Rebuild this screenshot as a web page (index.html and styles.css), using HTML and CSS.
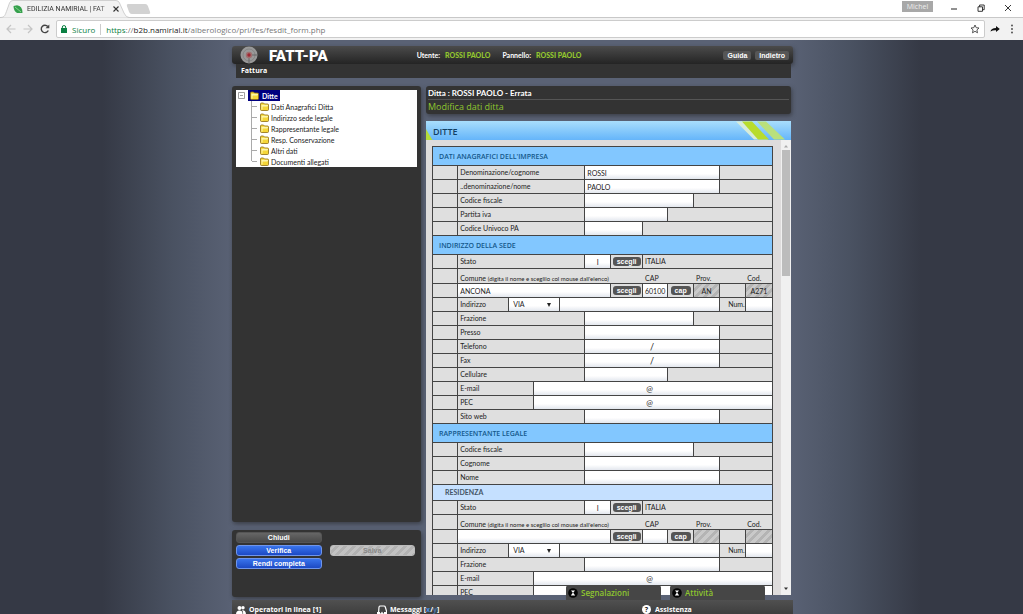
FILE: index.html
```
<!DOCTYPE html>
<html lang="it">
<head>
<meta charset="utf-8">
<title>EDILIZIA NAMIRIAL | FATT-PA</title>
<link rel="stylesheet" href="styles.css">
</head>
<body>
<svg class="defs" aria-hidden="true">
  <symbol id="folder" viewBox="0 0 9 9"><path d="M.5 7.5V2Q.5 1 1.500 1H3.500L4.500 2H7.500Q8.500 2 8.500 3V7.500Q8.500 8.500 7.500 8.500H1.500Q.5 8.500.5 7.500Z" fill="#f5d638" stroke="#8d6b12" stroke-width=".8"/><path d="M1.300 3.300H7.500V4H2V7.500" fill="none" stroke="#fffbc0" stroke-width=".9"/></symbol>
  <symbol id="up" viewBox="0 0 10 10"><circle cx="5" cy="5" r="4.800" fill="#050505"/><path d="M3 2.500H7L5 5ZM5 4.600L7.200 7.500H2.800Z" fill="#fff"/></symbol>
</svg>
<header class="browser">
  <div class="tabs">
    <div class="tab">
      <svg class="tab-shape" viewBox="0 0 129 18" preserveAspectRatio="none"><path d="M0 17.500C5 17.500 5 15 7 10L9.500 3Q10.500 .5 13 .5H116Q118.500 .5 119.500 3L124 13Q126 17.500 129 17.500V18H0Z" fill="#f2f2f2" stroke="#c5c5c5" stroke-width=".8"/></svg>
      <svg class="leaf" viewBox="0 0 10 10"><path d="M.5 2L4 1.300Q9.500 2 9.500 9H4Q.5 7 .5 2Z" fill="#35a04c"/><path d="M2 3L8 8" stroke="#9bdd9f" stroke-width=".8"/></svg>
      <span class="tab-title">EDILIZIA NAMIRIAL | FAT</span>
      <button class="plain tab-close" aria-label="Chiudi scheda"><svg viewBox="0 0 6 6"><path d="M.5.5L5.500 5.500M5.500.5L.5 5.500" stroke="#333" stroke-width="1.100"/></svg></button>
    </div>
    <button class="plain new-tab" aria-label="Nuova scheda"></button>
    <div class="window-buttons">
      <span class="user">Michel</span>
      <button class="plain" aria-label="Riduci"><svg viewBox="0 0 8 8"><path d="M1 5H7" stroke="#222"/></svg></button>
      <button class="plain" aria-label="Ripristina"><svg viewBox="0 0 8 8" fill="none" stroke="#222" stroke-width=".9"><path d="M1 2.800H5.500V7.300H1ZM2.600 2.800V1H7.200V5.700H5.500"/></svg></button>
      <button class="plain" aria-label="Chiudi"><svg viewBox="0 0 8 8"><path d="M1 1L7 7M7 1L1 7" stroke="#222" stroke-width=".9"/></svg></button>
    </div>
  </div>
  <div class="toolbar">
    <button class="plain" aria-label="Indietro"><svg viewBox="0 0 10 10" fill="none" stroke="#c4c4c4" stroke-width="1.200"><path d="M9.500 5H1M5 1L1 5L5 9"/></svg></button>
    <button class="plain" aria-label="Avanti"><svg viewBox="0 0 10 10" fill="none" stroke="#c4c4c4" stroke-width="1.200"><path d="M.5 5H9M5 1L9 5L5 9"/></svg></button>
    <button class="plain" aria-label="Ricarica"><svg viewBox="0 0 10 10" fill="none" stroke="#444" stroke-width="1.400"><path d="M8.300 6.500A3.700 3.700 0 1 1 7.800 2.500"/><path d="M9.300.5V4.300H5.500Z" fill="#444" stroke="none"/></svg></button>
    <div class="address">
      <svg class="lock" viewBox="0 0 6 8"><path d="M0 3H6V8H0Z" fill="#0b8043"/><path d="M1.300 3V2Q1.300.6 3 .6T4.700 2V3" fill="none" stroke="#0b8043"/></svg>
      <span class="secure">Sicuro</span>
      <span class="url"><span class="secure">https</span>://<b>b2b.namirial.it</b>/alberologico/pri/fes/fesdit_form.php</span>
      <svg class="star" viewBox="0 0 10 10"><path d="M5 1L6.200 3.700L9 4L6.900 5.900L7.500 8.800L5 7.300L2.500 8.800L3.100 5.900L1 4L3.800 3.700Z" fill="none" stroke="#444" stroke-width=".9"/></svg>
    </div>
    <button class="plain" aria-label="Condividi"><svg viewBox="0 0 10 10"><path d="M.5 7.500Q1 4 6 4V2L9.800 5L6 8V6.300Q3 6 .5 7.500Z" fill="#111"/></svg></button>
    <button class="plain" aria-label="Menu"><svg viewBox="0 0 10 10" fill="#444"><circle cx="5" cy="1.500" r=".9"/><circle cx="5" cy="5" r=".9"/><circle cx="5" cy="8.500" r=".9"/></svg></button>
  </div>
</header>
<div class="page">
  <div class="app">
    <header class="masthead">
      <div class="brand-bar">
        <svg class="logo" viewBox="0 0 18 18"><circle cx="9" cy="9" r="8.500" fill="#999"/><circle cx="9" cy="9" r="6" fill="none" stroke="#777" stroke-width=".6"/><path d="M9 9V17.500M9 9H17" stroke="#555" stroke-width=".7"/><circle cx="9" cy="9" r="3.200" fill="#a07070"/><circle cx="9" cy="9" r="1.700" fill="#a02833"/></svg>
        <h1>FATT-PA</h1>
        <div class="who"><span>Utente:</span><b>ROSSI PAOLO</b><span class="next">Pannello:</span><b>ROSSI PAOLO</b></div>
        <div class="brand-buttons"><button>Guida</button><button>Indietro</button></div>
      </div>
      <nav class="menu-bar">Fattura</nav>
    </header>
    <div class="columns">
      <aside>
        <div class="panel tree-panel">
          <div class="tree">
            <div class="root"><svg class="toggle" viewBox="0 0 7 7"><path d="M.5.5H6.500V6.500H.5ZM2 3.500H5" fill="none" stroke="#888" stroke-width=".8"/></svg><span class="selected"><svg class="folder"><use href="#folder"/></svg>Ditte</span></div>
            <ul>
              <li><svg class="folder"><use href="#folder"/></svg>Dati Anagrafici Ditta</li>
              <li><svg class="folder"><use href="#folder"/></svg>Indirizzo sede legale</li>
              <li><svg class="folder"><use href="#folder"/></svg>Rappresentante legale</li>
              <li><svg class="folder"><use href="#folder"/></svg>Resp. Conservazione</li>
              <li><svg class="folder"><use href="#folder"/></svg>Altri dati</li>
              <li><svg class="folder"><use href="#folder"/></svg>Documenti allegati</li>
            </ul>
          </div>
        </div>
        <div class="panel actions">
          <button class="grey">Chiudi</button>
          <button class="blue first">Verifica</button>
          <button class="off" disabled>Salva</button>
          <button class="blue first">Rendi completa</button>
        </div>
      </aside>
      <main>
        <div class="panel heading">
          <p>Ditta : ROSSI PAOLO - Errata</p>
          <h2>Modifica dati ditta</h2>
        </div>
        <section class="sheet">
          <h3 class="sheet-title">DITTE<svg class="stripes" viewBox="0 0 50 18"><path d="M0 0H14L32 18H18Z" fill="#d8ecd8"/><path d="M6 0H16L33 18H22Z" fill="#b8dc2c"/><path d="M21 0H30L49 18H38Z" fill="#b9e07c"/></svg></h3>
          <div class="sheet-body">
            <form class="scroll">
              <table>
                <colgroup><col class="c25"><col class="c51"><col class="c25"><col class="c26"><col class="c25"><col class="c26"><col class="c32"><col class="c25"><col class="c26"><col class="c26"><col class="c26"><col class="c27"></colgroup>
                <tbody>
                <tr class="section"><th colspan="12">DATI ANAGRAFICI DELL'IMPRESA</th></tr>
                <tr><td></td><td colspan="4"><label for="a1">Denominazione/cognome</label></td><td colspan="5" class="f"><input id="a1" value="ROSSI"></td><td colspan="2"></td></tr>
                <tr><td></td><td colspan="4"><label for="a2">..denominazione/nome</label></td><td colspan="5" class="f"><input id="a2" value="PAOLO"></td><td colspan="2"></td></tr>
                <tr><td></td><td colspan="4"><label for="a3">Codice fiscale</label></td><td colspan="4" class="f"><input id="a3"></td><td colspan="3"></td></tr>
                <tr><td></td><td colspan="4"><label for="a4">Partita iva</label></td><td colspan="3" class="f"><input id="a4"></td><td colspan="4"></td></tr>
                <tr><td></td><td colspan="4"><label for="a5">Codice Univoco PA</label></td><td colspan="2" class="f"><input id="a5"></td><td colspan="5"></td></tr>
                <tr class="section"><th colspan="12">INDIRIZZO DELLA SEDE</th></tr>
                <tr><td></td><td colspan="4"><label for="b1">Stato</label></td><td class="f"><input id="b1" class="mid" value="I"></td><td class="b"><button type="button">scegli</button></td><td colspan="5">ITALIA</td></tr>
                <tr class="captions"><td></td><td colspan="6" class="open"><label for="b2">Comune <small>(digita il nome e sceglilo col mouse dall'elenco)</small></label></td><td colspan="2" class="open"><label for="b3">CAP</label></td><td colspan="2" class="open"><label for="b4">Prov.</label></td><td class="last"><label for="b5">Cod.</label></td></tr>
                <tr><td></td><td colspan="5" class="f"><input id="b2" value="ANCONA"></td><td class="b"><button type="button">scegli</button></td><td class="f"><input id="b3" class="mid" value="60100"></td><td class="b"><button type="button">cap</button></td><td class="f"><input id="b4" class="mid hatch" value="AN" readonly></td><td></td><td class="f"><input id="b5" class="mid hatch" value="A271" readonly></td></tr>
                <tr><td></td><td><label for="b6">Indirizzo</label></td><td colspan="2" class="f"><div class="pick"><select id="b6"><option>VIA</option></select></div></td><td colspan="6" class="f"><input aria-label="Via"></td><td class="num"><label for="b7">Num.</label></td><td class="f"><input id="b7"></td></tr>
                <tr><td></td><td colspan="4"><label for="b8">Frazione</label></td><td colspan="4" class="f"><input id="b8"></td><td colspan="3"></td></tr>
                <tr><td></td><td colspan="4"><label for="b9">Presso</label></td><td colspan="5" class="f"><input id="b9"></td><td colspan="2"></td></tr>
                <tr><td></td><td colspan="4"><label for="b10">Telefono</label></td><td colspan="5" class="f"><input id="b10" class="mid sign" value="/"></td><td colspan="2"></td></tr>
                <tr><td></td><td colspan="4"><label for="b11">Fax</label></td><td colspan="5" class="f"><input id="b11" class="mid sign" value="/"></td><td colspan="2"></td></tr>
                <tr><td></td><td colspan="4"><label for="b12">Cellulare</label></td><td colspan="3" class="f"><input id="b12"></td><td colspan="4"></td></tr>
                <tr><td></td><td colspan="2"><label for="b13">E-mail</label></td><td colspan="9" class="f"><input id="b13" class="mid at" value="@"></td></tr>
                <tr><td></td><td colspan="2"><label for="b14">PEC</label></td><td colspan="9" class="f"><input id="b14" class="mid at" value="@"></td></tr>
                <tr><td></td><td colspan="4"><label for="b15">Sito web</label></td><td colspan="5" class="f"><input id="b15"></td><td colspan="2"></td></tr>
                <tr class="section"><th colspan="12">RAPPRESENTANTE LEGALE</th></tr>
                <tr><td></td><td colspan="4"><label for="d1">Codice fiscale</label></td><td colspan="4" class="f"><input id="d1"></td><td colspan="3"></td></tr>
                <tr><td></td><td colspan="4"><label for="d2">Cognome</label></td><td colspan="5" class="f"><input id="d2"></td><td colspan="2"></td></tr>
                <tr><td></td><td colspan="4"><label for="d3">Nome</label></td><td colspan="5" class="f"><input id="d3"></td><td colspan="2"></td></tr>
                <tr class="subsection"><th colspan="12">RESIDENZA</th></tr>
                <tr><td></td><td colspan="4"><label for="e1">Stato</label></td><td class="f"><input id="e1" class="mid" value="I"></td><td class="b"><button type="button">scegli</button></td><td colspan="5">ITALIA</td></tr>
                <tr class="captions"><td></td><td colspan="6" class="open"><label for="e2">Comune <small>(digita il nome e sceglilo col mouse dall'elenco)</small></label></td><td colspan="2" class="open"><label for="e3">CAP</label></td><td colspan="2" class="open"><label for="e4">Prov.</label></td><td class="last"><label for="e5">Cod.</label></td></tr>
                <tr><td></td><td colspan="5" class="f"><input id="e2"></td><td class="b"><button type="button">scegli</button></td><td class="f"><input id="e3"></td><td class="b"><button type="button">cap</button></td><td class="f"><input id="e4" class="hatch" readonly></td><td></td><td class="f"><input id="e5" class="hatch" readonly></td></tr>
                <tr><td></td><td><label for="e6">Indirizzo</label></td><td colspan="2" class="f"><div class="pick"><select id="e6"><option>VIA</option></select></div></td><td colspan="6" class="f"><input aria-label="Via"></td><td class="num"><label for="e7">Num.</label></td><td class="f"><input id="e7"></td></tr>
                <tr><td></td><td colspan="4"><label for="e8">Frazione</label></td><td colspan="5" class="f"><input id="e8"></td><td colspan="2"></td></tr>
                <tr><td></td><td colspan="2"><label for="e9">E-mail</label></td><td colspan="9" class="f"><input id="e9" class="mid at" value="@"></td></tr>
                <tr><td></td><td colspan="2"><label for="e10">PEC</label></td><td colspan="9" class="f"><input id="e10"></td></tr>
                </tbody>
              </table>
            </form>
            <div class="scrollbar"><svg viewBox="0 0 6 6"><path d="M1 4.500L3 2L5 4.500Z" fill="#aaa"/></svg><div class="track"><div class="thumb"></div></div><svg viewBox="0 0 6 6"><path d="M1 1.500L3 4L5 1.500Z" fill="#333"/></svg></div>
          </div>
        </section>
      </main>
    </div>
    <div class="drawers"><button><svg><use href="#up"/></svg>Segnalazioni</button><button><svg><use href="#up"/></svg>Attività</button></div>
    <footer>
      <span class="item"><svg viewBox="0 0 10 10" fill="#fff"><circle cx="3.500" cy="3" r="2"/><circle cx="7" cy="2.800" r="1.700"/><path d="M0 9.500Q0 5.500 3.500 5.500T6.500 9.500ZM7 9.500Q7.500 6.500 6 5.200Q10 4.800 10 9.500Z"/></svg>Operatori in linea [1]</span>
      <span class="item"><svg viewBox="0 0 10 10"><path d="M1.500 8.500L2 2Q2.200 1 3.500 1H7Q8 1 8.300 2L9.500 6V9H6L5 7.500L4 9Z" fill="none" stroke="#fff" stroke-width="1.200"/><path d="M0 7H3V10H0ZM7 7H10V10H7Z" fill="#fff"/></svg><span>Messaggi [<i>x</i>/<i class="dim">y</i>]</span></span>
      <span class="item"><span class="help">?</span>Assistenza</span>
    </footer>
  </div>
</div>
</body>
</html>
```
FILE: styles.css
```
* { box-sizing: border-box; }
body { margin: 0; height: 100vh; display: flex; flex-direction: column; overflow: hidden; font-family: "Open Sans", "Noto Sans", sans-serif; font-size: 7px; color: #222; }
button, input, select { font: inherit; color: inherit; margin: 0; padding: 0; border: 0; }
h1, h2, h3, p, ul { margin: 0; padding: 0; }
svg { display: block; flex: none; }
.defs { display: none; }
.plain { background: none; flex: none; }

/* browser frame */
.browser { flex: none; background: #fff; }
.tabs { display: flex; height: 18px; align-items: flex-start; border-bottom: 1px solid #c8c8c8; }
.tab { position: relative; width: 129px; height: 18px; display: flex; align-items: center; padding: 0 10px 0 13px; gap: 4px; }
.tab-shape { position: absolute; inset: 0; width: 100%; height: 100%; }
.leaf { position: relative; width: 10px; height: 10px; }
.tab-title { position: relative; flex: 1; white-space: nowrap; font-family: Roboto, sans-serif; font-size: 7px; color: #333; mask-image: linear-gradient(90deg, #000 85%, #0006); }
.tab-close { position: relative; width: 6px; }
.new-tab { width: 21px; height: 10px; margin: 4px 0 0 -1px; background: #d2d2d2; transform: skewX(20deg); border-radius: 2px; }
.window-buttons { margin-left: auto; display: flex; align-items: center; gap: 19px; padding-right: 11px; }
.window-buttons svg { width: 8px; height: 8px; margin-top: 4px; }
.user { width: 31px; height: 11px; margin-right: -2px; background: #a8a8a8; color: #eee; font-size: 7px; line-height: 11px; text-align: center; }
.toolbar { display: flex; align-items: center; gap: 7px; height: 22px; padding: 0 6px; background: #f2f2f2; }
.toolbar svg { width: 10px; height: 10px; }
.address { flex: 1; display: flex; align-items: center; gap: 5px; height: 18px; padding: 0 4px; margin: 0 -2px 0 -1px; background: #fff; border: 1px solid #ccc; border-radius: 2px; font-size: 8px; color: #777; }
.toolbar .lock { width: 6px; height: 8px; }
.secure { color: #0b8043; }
.url { border-left: 1px solid #ccc; padding-left: 5px; }
.url b { font-weight: 400; color: #222; }
.star { margin-left: auto; }

/* application */
.page { flex: 1; min-height: 0; display: flex; justify-content: center; background: linear-gradient(90deg, #353945 10%, #4a5262 17%, #5a6275 23%, #5a6275 77%, #4a5262 83%, #353945 90%); }
.app { position: relative; width: 100%; max-width: 559px; display: flex; flex-direction: column; padding-top: 6px; }
.masthead { flex: none; margin-right: -2px; color: #fff; }
.brand-bar { display: flex; align-items: center; height: 18px; padding: 0 4px 0 8px; background: linear-gradient(#4b4b4b, #242424); border-radius: 3px; box-shadow: 1px 2px 4px #2228; }
.logo { width: 18px; height: 18px; }
h1 { margin-left: 11px; padding-top: 2px; font: 900 15px/18px Roboto, sans-serif; }
.who { display: flex; gap: 5px; margin-left: 89px; font-family: Lato, sans-serif; font-weight: 700; line-height: 9px; }
.who b { color: #93c72e; }
.who .next { margin-left: 7px; }
.brand-buttons { display: flex; gap: 4px; margin-left: auto; }
.brand-buttons button { height: 9px; padding: 0 4px; background: #565656; border-radius: 2px; font-family: "Liberation Sans", sans-serif; font-weight: 700; line-height: 9px; color: #fff; }
.menu-bar { margin: 0 2px 0 4px; padding: 2px 5px; height: 14px; background: #333; font-weight: 700; font-size: 7px; line-height: 10px; }
.columns { flex: 1; min-height: 0; display: grid; grid-template-columns: 189px 1fr; gap: 5px; margin: 8px 0 19px; }
aside, main { min-height: 0; min-width: 0; display: flex; flex-direction: column; }
aside { gap: 8px; margin-bottom: -2px; }
main { gap: 7px; }
.panel { background: #333; border-radius: 3px; box-shadow: 1px 2px 4px #2228; }
.tree-panel { flex: 1; padding: 4px; }
.tree { height: 77px; background: #fff; color: #222; font-family: Lato, sans-serif; }
.root { display: flex; gap: 3px; align-items: center; height: 11px; padding-left: 2px; }
.toggle { width: 7px; height: 7px; }
.selected { display: flex; gap: 3px; align-items: center; height: 11px; padding: 0 2px; background: #000080; color: #fff; font-weight: 700; }
.folder { width: 9px; height: 9px; }
.tree ul { list-style: none; margin-left: 15px; }
.tree li { display: flex; align-items: center; gap: 2px; height: 11px; padding-left: 8px; border-left: 1px solid #aaa; background: linear-gradient(#aaa, #aaa) 0 5px / 5px 1px no-repeat; white-space: nowrap; }
.tree li:last-child { border-image: linear-gradient(#aaa 50%, transparent 50%) 1; }
.actions { flex: none; height: 67px; display: grid; grid-template-columns: 1fr 1fr; grid-auto-rows: 11px; gap: 2px 8px; padding: 2px 6px 0 4px; }
.actions button { border-radius: 3px; font: 700 7px/9px "Liberation Sans", sans-serif; color: #fff; border: 1px solid #6f95ea; }
.actions .first { grid-column: 1; }
.actions .blue { background: linear-gradient(#3974ec, #1c49c4); }
.actions .grey { background: linear-gradient(#666, #4a4a4a); border-color: #555; }
.actions .off { background: repeating-linear-gradient(135deg, #c2c2c2 0 3px, #b2b2b2 3px 6px); color: #888; border-color: #bbb; }
.heading { flex: none; height: 28px; padding: 0 2px; color: #fff; }
.heading p { height: 14px; border-bottom: 1px solid #555; font-family: Lato, sans-serif; font-weight: 700; font-size: 8px; line-height: 14px; }
.heading h2 { color: #8ec52f; font-weight: 400; font-size: 9px; line-height: 13px; }
.sheet { flex: 1; min-height: 0; display: flex; flex-direction: column; background: #dedcdc; }
.sheet-title { flex: none; display: flex; align-items: center; height: 19px; padding: 2px 0 0 7px; background: linear-gradient(60deg, #b5dc3a 5px, transparent 6px), linear-gradient(#a9defc, #65b5fa); color: #123f63; font-weight: 600; font-size: 9px; }
.stripes { width: 50px; height: 19px; margin: -2px 5px 0 auto; }
.sheet-body { flex: 1; min-height: 0; display: flex; }
.scroll { flex: 1; min-width: 0; overflow: hidden; padding: 6px 8px 0 6px; font-family: Lato, sans-serif; }
table { width: 100%; table-layout: fixed; border-collapse: collapse; background: #dfdfdf; }
.c25 { width: 7.4%; }
.c26 { width: 7.6%; }
.c27 { width: 8%; }
.c32 { width: 9.4%; }
.c51 { width: 15%; }
td, th { border: 1px solid #444; padding: 0 2px; height: 14px; line-height: 11px; text-align: left; font-weight: 400; white-space: nowrap; }
.section th { height: 19px; padding-left: 6px; background: #82c7ff; color: #14588c; font-family: "Open Sans", sans-serif; font-weight: 600; }
.subsection th { height: 16px; padding-left: 12px; background: #c5e0ff; color: #456; font-weight: 700; }
.f, .b { padding: 0; }
.f input, .f select { display: block; width: 100%; height: 13px; padding: 0 2px; background: linear-gradient(#fff 60%, #e3e7ee); border-radius: 0; }
.f .mid { text-align: center; padding: 0; }
.f .sign, .f .at { font-size: 9px; }
.f .at { font-size: 8px; padding-right: 7px; }
.f .hatch { background: repeating-linear-gradient(135deg, #c9c9c9 0 3px, #b4b4b4 3px 6px); }
.b { text-align: center; }
.b button { display: block; height: 9px; margin: 0 auto; padding: 0 4px; background: #555; border-radius: 3px; color: #fff; font-family: "Liberation Sans", sans-serif; font-weight: 700; line-height: 8px; }
.captions td { height: 15px; padding-top: 4px; line-height: 9px; }
.captions .open, .captions .last { border-left-color: transparent; border-right: 0; }
.captions .open:nth-child(2) { border-left: 1px solid #444; }
.captions .last { border-left: 0; border-right: 1px solid #444; }
.captions small { font-size: 6px; }
.num { padding: 0; text-align: right; }
.pick { position: relative; }
.pick select { appearance: none; padding-left: 4px; }
.pick::after { content: ""; position: absolute; right: 8px; top: 5px; border: 2px solid transparent; border-top: 4px solid #222; border-bottom: 0; }
.scrollbar { flex: none; width: 10px; display: flex; flex-direction: column; align-items: center; padding: 2px 0; background: #f0f0f0; }
.scrollbar svg { width: 6px; height: 8px; }
.track { flex: 1; width: 8px; }
.thumb { height: 29%; background: #bcbcbc; }
.drawers { position: absolute; right: 26px; bottom: 14px; display: flex; gap: 9px; }
.drawers button { width: 95px; height: 15px; display: flex; align-items: center; gap: 3px; padding-left: 2px; background: #464646; border-radius: 3px 3px 0 0; color: #8ec52f; font-size: 8px; font-weight: 600; }
.drawers svg { width: 10px; height: 10px; }
footer { position: absolute; left: 0; right: -2px; bottom: 0; height: 14px; display: grid; grid-template-columns: 141px 1fr 151px; padding: 5px 0 0 4px; background: linear-gradient(#505050, #3e3e3e); color: #fff; font-weight: 700; line-height: 9px; }
.item { display: flex; height: 9px; white-space: pre; }
.item svg { width: 10px; height: 10px; margin-right: 3px; }
.item i { font-style: normal; color: #4a90e0; }
.item .dim { color: #4a73a8; }
.help { width: 9px; height: 9px; margin-right: 4px; border-radius: 50%; background: #fff; color: #222; text-align: center; }
```
